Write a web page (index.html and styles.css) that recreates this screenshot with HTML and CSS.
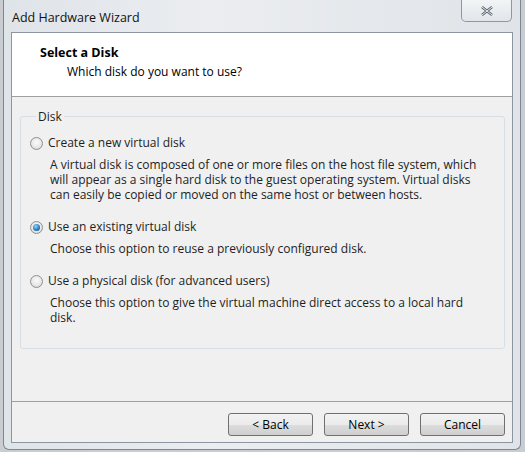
FILE: index.html
```html
<!DOCTYPE html>
<html>
<head>
<meta charset="utf-8">
<link rel="stylesheet" href="styles.css">
</head>
<body>
<div class="desk">
  <div class="window">
    <div class="titlebar">
      <span class="title">Add Hardware Wizard</span>
      <button class="close" aria-label="Close">
        <svg width="14" height="10" viewBox="0 0 14 10"><path d="M2 1 L12 9 M12 1 L2 9" stroke="#5a6470" stroke-width="2.6" fill="none"/><path d="M2 1 L12 9 M12 1 L2 9" stroke="#e8ecf0" stroke-width="1" fill="none"/></svg>
      </button>
    </div>
    <div class="client">
      <div class="header">
        <div class="h-title">Select a Disk</div>
        <div class="h-sub">Which disk do you want to use?</div>
      </div>
      <div class="body">
        <fieldset class="group">
          <legend>Disk</legend>
          <div class="option">
            <label class="opt-label"><span class="radio"></span>Create a new virtual disk</label>
            <p class="desc">A virtual disk is composed of one or more files on the host file system, which will appear as a single hard disk to the guest operating system. Virtual disks can easily be copied or moved on the same host or between hosts.</p>
          </div>
          <div class="option">
            <label class="opt-label"><span class="radio checked"></span>Use an existing virtual disk</label>
            <p class="desc">Choose this option to reuse a previously configured disk.</p>
          </div>
          <div class="option">
            <label class="opt-label"><span class="radio"></span>Use a physical disk (for advanced users)</label>
            <p class="desc">Choose this option to give the virtual machine direct access to a local hard disk.</p>
          </div>
        </fieldset>
      </div>
      <div class="footer">
        <button class="btn">&lt; Back</button>
        <button class="btn">Next &gt;</button>
        <button class="btn">Cancel</button>
      </div>
    </div>
  </div>
</div>
</body>
</html>
```
FILE: styles.css
```css
html, body {
  margin: 0;
  padding: 0;
}
body {
  width: 525px;
  height: 452px;
  overflow: hidden;
  background: #c9cdd2;
  font-family: "Open Sans", "Noto Sans", sans-serif;
  font-size: 12px;
  color: #1e1e1e;
}
.desk {
  padding: 0 4px 0 3px;
  height: 452px;
  box-sizing: border-box;
}
.window {
  height: 450px;
  box-sizing: border-box;
  border: 1px solid #7d8791;
  border-top: none;
  border-radius: 0 0 6px 6px;
  background: linear-gradient(90deg, #dfe4e9 0%, #ebedf0 40%, #e0e4e8 100%);
  padding: 0 7px 6px 7px;
  display: flex;
  flex-direction: column;
}
.titlebar {
  height: 32px;
  display: flex;
  align-items: flex-start;
  justify-content: space-between;
  flex: none;
}
.title {
  margin-top: 9px;
  margin-left: 1px;
  font-family: "Open Sans", sans-serif;
  font-size: 12.5px;
  color: #111;
}
.close {
  width: 51px;
  height: 22px;
  margin-right: 1px;
  border: 1px solid #8e98a3;
  border-top: none;
  border-radius: 0 0 5px 5px;
  background: linear-gradient(#f2f4f6, #e2e6ea);
  display: flex;
  align-items: center;
  justify-content: center;
  padding: 0;
}
.client {
  flex: 1;
  border: 1px solid #8c96a0;
  background: #f0f0f0;
  display: flex;
  flex-direction: column;
}
.header {
  height: 64px;
  background: #fff;
  border-bottom: 1px solid #a0a0a0;
  box-sizing: border-box;
  padding: 11px 0 0 28px;
}
.h-title {
  font-weight: bold;
  font-size: 12.5px;
  line-height: 18px;
  color: #000;
}
.h-sub {
  margin-left: 27px;
  margin-top: 2px;
  line-height: 16px;
  color: #000;
}
.body {
  flex: 1;
  padding: 11px 7px 0 8px;
  border-bottom: 1px solid #a0a0a0;
}
.group {
  margin: 0;
  height: 241px;
  box-sizing: border-box;
  border: 1px solid #d5dfe5;
  border-radius: 3px;
  padding: 9px 0 0 9px;
}
.group legend {
  padding: 0 2px;
  margin-left: 6px;
  font-size: 12px;
  color: #1e1e1e;
}
.option {
  margin-bottom: 16px;
}
.opt-label {
  display: flex;
  align-items: center;
  line-height: 18px;
}
.radio {
  width: 13px;
  height: 13px;
  border-radius: 50%;
  border: 1px solid #8f8f8f;
  box-sizing: border-box;
  background: radial-gradient(circle at 50% 40%, #fafafa 0%, #e8e8e8 55%, #cfcfcf 100%);
  margin-right: 5px;
  flex: none;
  position: relative;
}
.radio.checked::after {
  content: "";
  position: absolute;
  left: 2px;
  top: 2px;
  width: 7px;
  height: 7px;
  border-radius: 50%;
  background: radial-gradient(circle at 40% 35%, #8fd6ff 0%, #2a7fc0 55%, #0c3f70 100%);
}
.desc {
  margin: 5px 0 0 20px;
  line-height: 15px;
  width: 440px;
}
.footer {
  height: 40px;
  display: flex;
  justify-content: flex-end;
  align-items: flex-start;
  gap: 11px;
  padding: 11px 7px 0 0;
  box-sizing: border-box;
  flex: none;
}
.btn {
  width: 85px;
  height: 23px;
  border: 1px solid #707070;
  border-radius: 3px;
  background: linear-gradient(#f2f2f2 0%, #ebebeb 50%, #dddddd 51%, #cfcfcf 100%);
  font-family: "Open Sans", "Noto Sans", sans-serif;
  font-size: 12px;
  color: #000;
  padding: 0;
}
```
